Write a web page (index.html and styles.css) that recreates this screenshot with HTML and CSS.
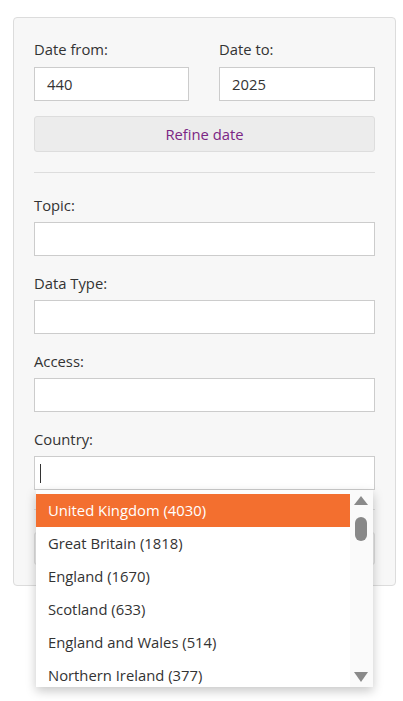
FILE: index.html
```html
<!DOCTYPE html>
<html lang="en">
<head>
<meta charset="utf-8">
<title>Filters</title>
<link rel="stylesheet" href="styles.css">
</head>
<body>
<div class="panel">
  <div class="date-row">
    <div class="date-col">
      <label class="lbl">Date from:</label>
      <div class="input">440</div>
    </div>
    <div class="date-col">
      <label class="lbl">Date to:</label>
      <div class="input">2025</div>
    </div>
  </div>
  <button class="btn refine">Refine date</button>
  <hr class="sep">
  <div class="field">
    <label class="lbl">Topic:</label>
    <div class="input"></div>
  </div>
  <div class="field">
    <label class="lbl">Data Type:</label>
    <div class="input"></div>
  </div>
  <div class="field">
    <label class="lbl">Access:</label>
    <div class="input"></div>
  </div>
  <div class="field country">
    <label class="lbl">Country:</label>
    <div class="input search"><span class="caret"></span></div>
    <div class="dropdown">
      <ul class="options">
        <li class="opt active">United Kingdom (4030)</li>
        <li class="opt">Great Britain (1818)</li>
        <li class="opt">England (1670)</li>
        <li class="opt">Scotland (633)</li>
        <li class="opt">England and Wales (514)</li>
        <li class="opt">Northern Ireland (377)</li>
      </ul>
      <div class="scrollbar">
        <span class="arrow up"></span>
        <span class="thumb"></span>
        <span class="arrow down"></span>
      </div>
    </div>
  </div>
  <hr class="sep sep2">
  <button class="btn search-btn">Search</button>
</div>
</body>
</html>
```
FILE: styles.css
```css
* { box-sizing: border-box; }
html, body { margin: 0; padding: 0; background: #fff; min-height: 701px; }
body {
  font-family: "Open Sans", "Liberation Sans", sans-serif;
  font-size: 14.8px;
  color: #333;
  padding: 17px 8px 0 13px;
}
.panel {
  width: 383px;
  background: #f7f7f7;
  border: 1px solid #dcdcdc;
  border-radius: 4px;
  padding: 21px 20px 20px 20px;
}
.date-row {
  display: grid;
  grid-template-columns: 155px 156px;
  column-gap: 30px;
}
.lbl {
  display: block;
  line-height: 20px;
  height: 20px;
  margin-bottom: 8px;
  color: #333;
}
.input {
  height: 34px;
  background: #fff;
  border: 1px solid #ccc;
  padding: 0 12px;
  line-height: 32px;
  color: #333;
}
.btn {
  display: block;
  width: 100%;
  font-family: inherit;
  font-size: 14.8px;
  border: 1px solid #ddd;
  border-radius: 3px;
  background: #ececec;
}
.refine {
  margin-top: 15px;
  height: 36px;
  color: #7b2584;
}
.sep {
  border: 0;
  border-top: 1px solid #ddd;
  margin: 20px 0 22px 0;
  height: 0;
}
.field { margin-bottom: 17px; }
.field .lbl { margin-bottom: 7px; }
.country { position: relative; margin-bottom: 0; z-index: 2; }
.search { padding-left: 5px; }
.caret {
  display: inline-block;
  width: 1px;
  height: 19px;
  background: #333;
  vertical-align: middle;
  margin-top: -3px;
}
.sep2 { margin: 19px 0 22px 0; }
.search-btn { height: 33px; color: #333; }
.dropdown {
  position: absolute;
  top: 61px;
  left: 2px;
  right: 2px;
  height: 197px;
  background: #fcfcfc;
  box-shadow: 0 4px 10px rgba(0,0,0,0.22);
  display: flex;
  overflow: hidden;
  padding-top: 4px;
}
.options {
  list-style: none;
  margin: 0;
  padding: 0;
  flex: 1;
  background: #fff;
}
.opt {
  height: 33px;
  line-height: 33px;
  padding-left: 12px;
  font-size: 14.8px;
  color: #333;
  white-space: nowrap;
}
.opt.active { background: #f36f2f; color: #fff; }
.scrollbar {
  width: 23px;
  position: relative;
  background: #fafafa;
  margin-top: -4px;
}
.arrow {
  position: absolute;
  left: 4px;
  width: 0;
  height: 0;
  border-left: 7px solid transparent;
  border-right: 7px solid transparent;
}
.arrow.up { top: 6px; border-bottom: 9px solid #8a8a8a; }
.arrow.down { bottom: 5px; border-top: 10px solid #8a8a8a; }
.thumb {
  position: absolute;
  left: 5px;
  top: 27px;
  width: 12px;
  height: 24px;
  border-radius: 6px;
  background: #888;
}
```
